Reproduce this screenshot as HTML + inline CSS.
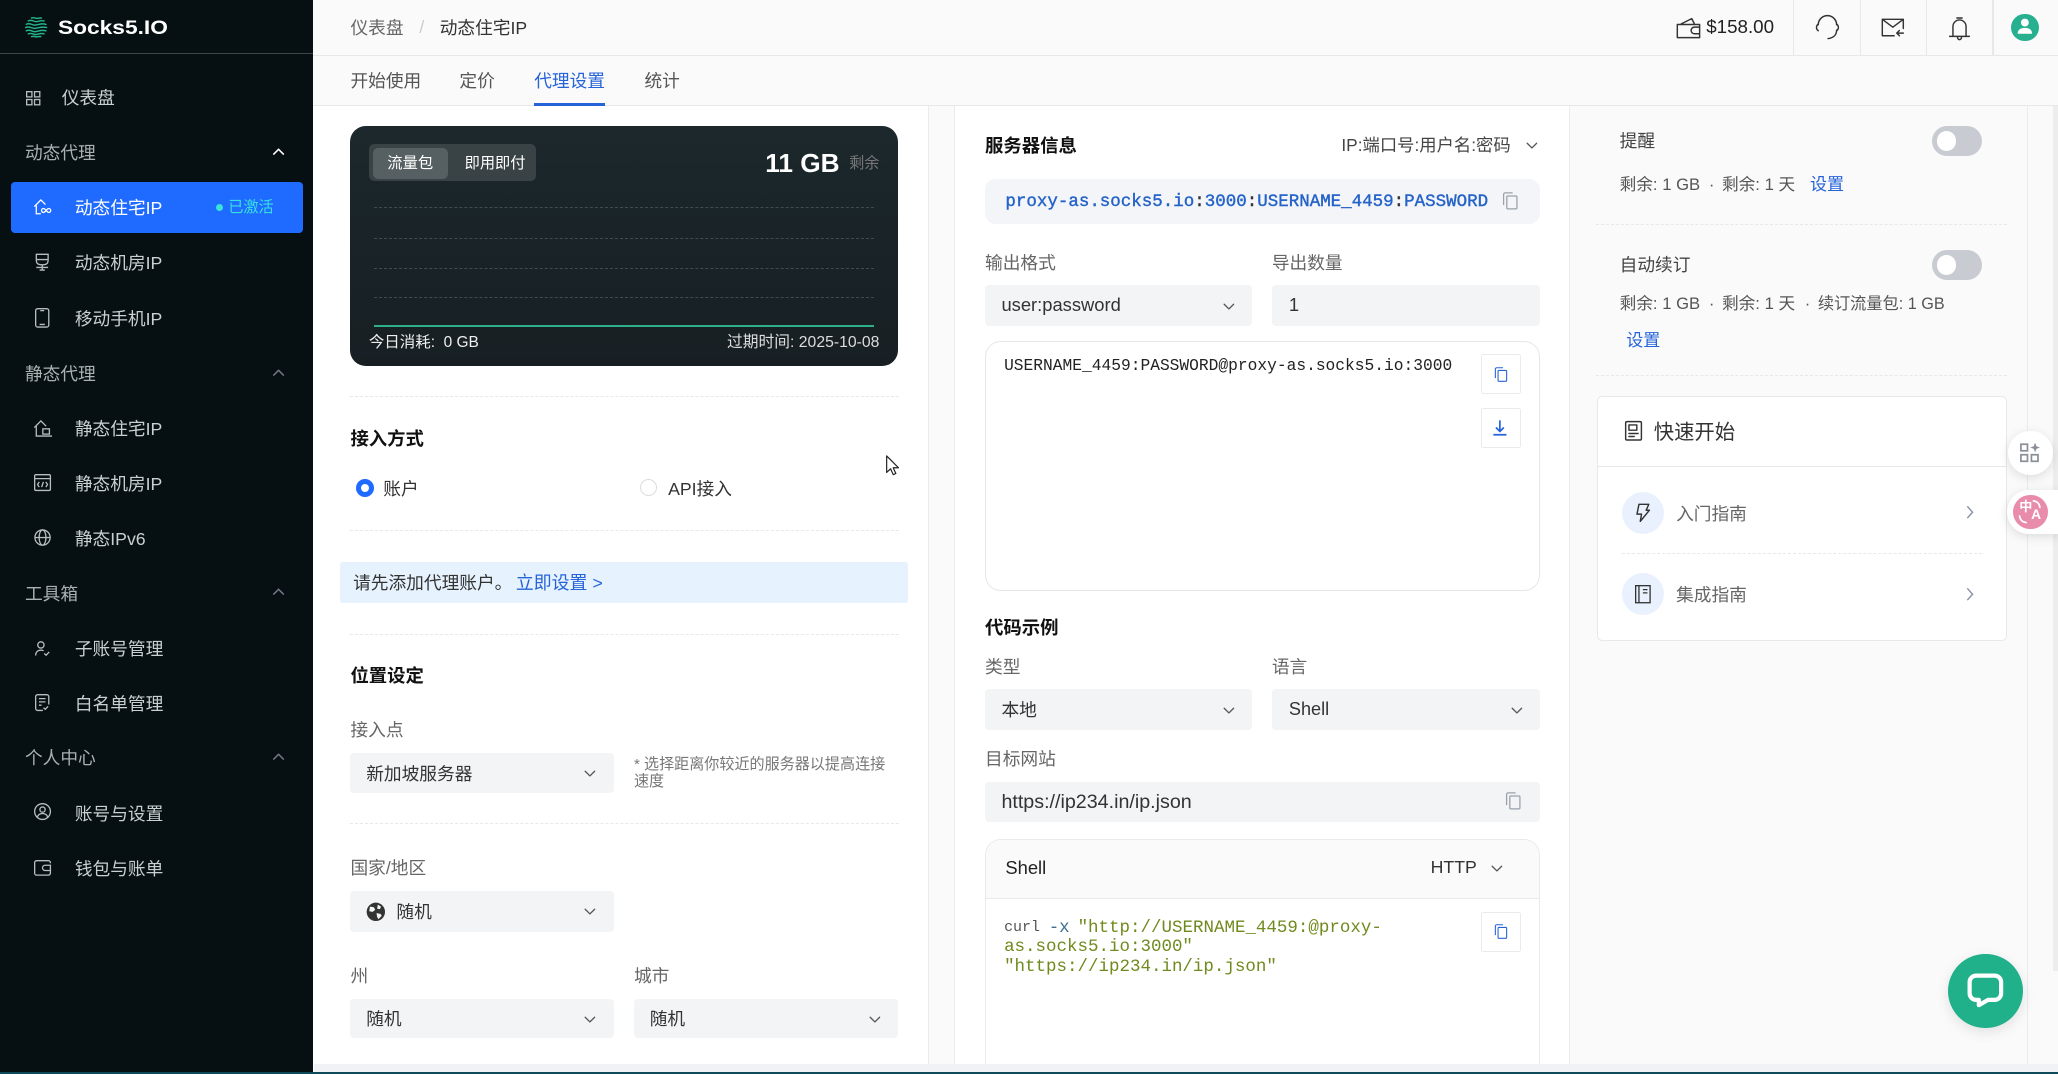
<!DOCTYPE html>
<html lang="zh-CN"><head><meta charset="utf-8"><title>Socks5.IO</title>
<style>
html,body{margin:0;padding:0;width:2058px;height:1074px;overflow:hidden;background:#fff}
#w{position:absolute;left:0;top:0;width:1568px;height:818.3px;zoom:1.3125;overflow:hidden;background:#fff;font-family:"Liberation Sans","Noto Sans CJK SC",sans-serif;font-size:13.5px;color:#333}
#w *{box-sizing:border-box}
.a{position:absolute}
.t{position:absolute;white-space:nowrap;line-height:20px;margin-top:.8px}
.n{color:#c9d0d1}.h{color:#a9b1b3}
.b{font-weight:700;color:#111;font-size:14px}
.l{color:#666}
.s{position:absolute;background:#f3f4f6;border-radius:3px}
.d{position:absolute;height:0;border-top:1px dashed #e8e8e8}
.m{font-family:"Liberation Mono","Noto Sans CJK SC",monospace}
.bt{position:absolute;width:31px;height:30px;background:#fff;border:1px solid #e8eaee;border-radius:2px}
svg{position:absolute;overflow:visible}
.i{fill:none;stroke:#b6bebf;stroke-width:1}
.c{fill:none;stroke:#555;stroke-width:1.1;stroke-linecap:round;stroke-linejoin:round}
.blue{color:#2563d9}
.sm{color:#555;font-size:12.7px}
</style></head><body>
<svg width="0" height="0" style="position:absolute"><defs>
<symbol id="cd" viewBox="0 0 10 6"><path d="M1 1l4 4 4-4" fill="none" stroke="#555" stroke-width="1.1" stroke-linecap="round" stroke-linejoin="round"/></symbol>
<symbol id="cp" viewBox="0 0 16 18"><path d="M1.5 13V3A1.5 1.5 0 0 1 3 1.500H10" fill="none" stroke="currentColor" stroke-width="1.2"/><rect x="4.500" y="4.500" width="9.500" height="12" rx="1" fill="none" stroke="currentColor" stroke-width="1.2"/></symbol>
</defs></svg>
<div id="w">
<!-- backgrounds -->
<div class="a" style="left:707px;top:80px;width:861px;height:731px;background:#fafafa"></div>
<div class="a" style="left:239px;top:80px;width:468px;height:731px;background:#fff"></div>
<div class="a" style="left:707px;top:80px;width:1px;height:731px;background:#ececec"></div>
<div class="a" style="left:727px;top:80px;width:469px;height:731px;background:#fff;border-left:1px solid #ececec;border-right:1px solid #ececec"></div>
<div class="a" style="left:1544.500px;top:80px;width:1px;height:731px;background:#ececec"></div>
<div class="a" style="left:1564px;top:80px;width:4px;height:660px;background:#ededed"></div>

<!-- header -->
<div class="a" style="left:238px;top:0;width:1330px;height:42.500px;background:#fafafa;border-bottom:1px solid #e8e8e8"></div>
<div class="a" style="left:238px;top:43px;width:1330px;height:37.500px;background:#fafafa;border-bottom:1px solid #e8e8e8"></div>
<div class="t" style="left:267px;top:11px;color:#666">仪表盘</div>
<div class="t" style="left:319.500px;top:10px;color:#ccc">/</div>
<div class="t" style="left:335px;top:11px;color:#333">动态住宅IP</div>
<div class="t" style="left:267px;top:51px;color:#555">开始使用</div>
<div class="t" style="left:350px;top:51px;color:#555">定价</div>
<div class="t" style="left:407px;top:51px;color:#2563d9">代理设置</div>
<div class="a" style="left:407px;top:78.500px;width:54px;height:2px;background:#2563d9"></div>
<div class="t" style="left:491px;top:51px;color:#555">统计</div>
<div class="a" style="left:1366px;top:0;width:1px;height:42px;background:#e8e8e8"></div>
<div class="a" style="left:1417px;top:0;width:1px;height:42px;background:#e8e8e8"></div>
<div class="a" style="left:1467.500px;top:0;width:1px;height:42px;background:#e8e8e8"></div>
<div class="a" style="left:1518px;top:0;width:1px;height:42px;background:#e8e8e8"></div>
<svg style="left:1277px;top:12px" width="19" height="18" viewBox="0 0 19 18"><path class="c" style="stroke:#333" d="M1 6.500h17v2M18 13.500v3H1v-10M4 6l8-4 2 4M18 8.500h-4a2.500 2.500 0 0 0 0 5h4v-5"/></svg>
<div class="t" style="left:1300px;top:9.500px;color:#222;font-size:14.300px">$158.00</div>
<svg style="left:1381px;top:10px" width="22" height="22" viewBox="0 0 22 22"><path class="c" style="stroke:#333" d="M4 9a7 7 0 0 1 14 0M4 8.500a3 3 0 0 0 0 5M18 8.500a3 3 0 0 1 0 5M18 13c0 4-3 6-6.500 6.500"/></svg>
<svg style="left:1433px;top:14px" width="18" height="15" viewBox="0 0 18 15"><path class="c" style="stroke:#333" d="M10 13.500H1V1h16v7M1 1l8 6 8-6M17 11.500h-5M14 9.500l-2 2 2 2"/></svg>
<svg style="left:1485px;top:12px" width="16" height="19" viewBox="0 0 16 19"><path class="c" style="stroke:#333" d="M6 1.500h4M3 15V8a5 5 0 0 1 10 0v7M.5 15.500h15M6.500 16.500a1.500 1.500 0 0 0 3 0"/></svg>
<div class="a" style="left:1532.500px;top:10.500px;width:21px;height:21px;border-radius:50%;background:#26b08f"></div>
<svg style="left:1537px;top:14px" width="12" height="13" viewBox="0 0 12 13"><circle cx="6" cy="3.500" r="3" fill="#fff"/><path d="M.5 12c0-3 2-4.500 5.500-4.500s5.500 1.500 5.500 4.500z" fill="#fff"/></svg>

<!-- sidebar -->
<div class="a" style="left:0;top:0;width:238.500px;height:817px;background:#060f12"></div>
<div class="a" style="left:0;top:40px;width:238.500px;height:1px;background:#3c4547"></div>
<svg style="left:19px;top:12.500px" width="17" height="17" viewBox="0 0 17 17"><g fill="none" stroke="#25b48c" stroke-width="1.100" stroke-linecap="round"><path d="M5 1.500c2-.8 3 .5 4.500.3 1-.1 2-.5 3-.2"/><path d="M2.500 3.800c3-1.500 4 .8 6.500.5 2-.2 3-1.300 5.500-.5"/><path d="M1 6.300c3-1.500 4.500 1 7 .6 3-.4 4.500-1.700 8-.5"/><path d="M.5 8.800c3-1.500 4.500 1 7.500.6 3-.4 5-1.600 8.500-.6"/><path d="M1 11.300c3-1.500 4.500 1 7 .6 3-.4 4.500-1.700 8-.6"/><path d="M2.500 13.600c2.500-1.200 4 .8 6 .5 2-.3 3.500-1.300 6-.5"/><path d="M5 15.700c2-.6 3 .3 4 .2 1-.1 2-.5 3-.2"/></g></svg>
<div class="t" style="left:44px;top:10.500px;color:#fff;font-weight:700;font-size:15px;transform:scaleX(1.155);transform-origin:0 50%">Socks5.IO</div>

<svg style="left:20px;top:69px" width="11" height="11" viewBox="0 0 11 11"><g class="i"><rect x=".5" y=".5" width="4" height="4"/><rect x="6.500" y=".5" width="4" height="4"/><rect x=".5" y="6.500" width="4" height="4"/><rect x="6.500" y="6.500" width="4" height="4"/></g></svg>
<div class="t n" style="left:47px;top:64px">仪表盘</div>
<div class="t h" style="left:19px;top:106px">动态代理</div>
<svg style="left:207px;top:113px;color:#fff" width="10" height="6" viewBox="0 0 10 6"><path d="M1 5l4-4 4 4" fill="none" stroke="#fff" stroke-width="1.200"/></svg>
<div class="a" style="left:8px;top:139px;width:223px;height:38.500px;border-radius:3px;background:#1f6bff"></div>
<svg style="left:25px;top:151px" width="15" height="13" viewBox="0 0 15 13"><path class="i" style="stroke:#fff" d="M1 6.500L6 1.500l3.500 3.500M2.500 5.500v6.500h3.500"/><path class="i" style="stroke:#fff" d="M8 11a1.500 1.500 0 1 1 0-3c1.500 0 2.500 3 4 3a1.500 1.500 0 1 0 0-3c-1.500 0-2.500 3-4 3z"/></svg>
<div class="t" style="left:57px;top:148px;color:#fff">动态住宅IP</div>
<div class="a" style="left:164.500px;top:155.500px;width:5.500px;height:5.500px;border-radius:50%;background:#37e4d6"></div>
<div class="t" style="left:174px;top:148px;color:#37e0e0;font-size:11.500px">已激活</div>

<svg style="left:27px;top:193px" width="11" height="14" viewBox="0 0 11 14"><path class="i" d="M1 1h9v4H1zM1 5c0 3 1 4 4.500 4S10 8 10 5M5.500 9v3.500M1 11h9M3.500 13h4"/></svg>
<div class="t n" style="left:57px;top:190px">动态机房IP</div>
<svg style="left:27px;top:235px" width="11" height="15" viewBox="0 0 11 15"><rect class="i" x=".5" y=".5" width="10" height="14" rx="1.500"/><path class="i" d="M4 2h3M3.500 12.500h4"/></svg>
<div class="t n" style="left:57px;top:232px">移动手机IP</div>
<div class="t h" style="left:19px;top:274px">静态代理</div>
<svg style="left:207px;top:281px" width="10" height="6" viewBox="0 0 10 6"><path d="M1 5l4-4 4 4" fill="none" stroke="#778" stroke-width="1.100"/></svg>
<svg style="left:25px;top:319px" width="15" height="14" viewBox="0 0 15 14"><path class="i" d="M1 6.500L6 1.500l4 4M2.500 5.500v7.500h12"/><rect class="i" x="7.500" y="7.500" width="5" height="4"/></svg>
<div class="t n" style="left:57px;top:316px">静态住宅IP</div>
<svg style="left:26px;top:361px" width="13" height="13" viewBox="0 0 13 13"><rect class="i" x=".5" y=".5" width="12" height="12" rx="1"/><path class="i" d="M.5 3.500h12M4 6L2.700 8 4 10M9 6l1.300 2L9 10M7.200 6L5.800 10"/></svg>
<div class="t n" style="left:57px;top:358px">静态机房IP</div>
<svg style="left:26px;top:403px" width="13" height="13" viewBox="0 0 13 13"><circle class="i" cx="6.500" cy="6.500" r="5.800"/><ellipse class="i" cx="6.500" cy="6.500" rx="2.600" ry="5.800"/><path class="i" d="M.7 6.500h11.600"/></svg>
<div class="t n" style="left:57px;top:400px">静态IPv6</div>
<div class="t h" style="left:19px;top:441.500px">工具箱</div>
<svg style="left:207px;top:448px" width="10" height="6" viewBox="0 0 10 6"><path d="M1 5l4-4 4 4" fill="none" stroke="#778" stroke-width="1.100"/></svg>
<svg style="left:27px;top:488px" width="12" height="12" viewBox="0 0 12 12"><circle class="i" cx="4.500" cy="3" r="2.400"/><path class="i" d="M.5 11c0-2.500 1.500-4 4-4 .8 0 1.500.1 2 .4M7 9.500l1.500 1.300 2.300-2.500"/></svg>
<div class="t n" style="left:57px;top:483.500px">子账号管理</div>
<svg style="left:27px;top:529px" width="11" height="13" viewBox="0 0 11 13"><path class="i" d="M6 12.500H2A1.500 1.500 0 0 1 .5 11V2A1.500 1.500 0 0 1 2 .5h7A1.500 1.500 0 0 1 10.500 2v6M3 3.500h5M3 6h5M3 8.500h2M6.500 10.500l1.300 1.200 2.200-2.300"/></svg>
<div class="t n" style="left:57px;top:525.500px">白名单管理</div>
<div class="t h" style="left:19px;top:567.200px">个人中心</div>
<svg style="left:207px;top:574px" width="10" height="6" viewBox="0 0 10 6"><path d="M1 5l4-4 4 4" fill="none" stroke="#778" stroke-width="1.100"/></svg>
<svg style="left:26px;top:612px" width="13" height="13" viewBox="0 0 13 13"><circle class="i" cx="6.500" cy="6.500" r="6"/><circle class="i" cx="6.500" cy="5" r="2"/><path class="i" d="M2.500 11c.5-2 2-3 4-3s3.500 1 4 3"/></svg>
<div class="t n" style="left:57px;top:609.300px">账号与设置</div>
<svg style="left:26px;top:655px" width="13" height="12" viewBox="0 0 13 12"><path class="i" d="M12.500 2.500V2A1.500 1.500 0 0 0 11 .5H2A1.500 1.500 0 0 0 .5 2v8A1.500 1.500 0 0 0 2 11.500h9a1.500 1.500 0 0 0 1.500-1.500V8"/><path class="i" d="M12.500 4H8.500a2 2 0 0 0 0 4h4z"/></svg>
<div class="t n" style="left:57px;top:651.300px">钱包与账单</div>

<!-- dark card -->
<div class="a" style="left:267px;top:96px;width:417.500px;height:183px;border-radius:12px;background:linear-gradient(180deg,#1c282c,#171f23)"></div>
<div class="a" style="left:281px;top:110px;width:127px;height:28px;border-radius:4px;background:#394346"></div>
<div class="a" style="left:284px;top:113px;width:57.500px;height:23px;border-radius:4px;background:#565f62"></div>
<div class="t" style="left:295px;top:114px;color:#fff;font-size:11.700px">流量包</div>
<div class="t" style="left:354px;top:114px;color:#fff;font-size:11.600px">即用即付</div>
<div class="t" style="left:583px;top:113.200px;color:#fff;font-weight:700;font-size:20px">11 GB</div>
<div class="t" style="left:647px;top:114px;color:#777;font-size:11.500px">剩余</div>
<div class="d" style="left:285px;top:158px;width:381px;border-color:#414b4e"></div>
<div class="d" style="left:285px;top:181px;width:381px;border-color:#414b4e"></div>
<div class="d" style="left:285px;top:204px;width:381px;border-color:#414b4e"></div>
<div class="d" style="left:285px;top:226.500px;width:381px;border-color:#414b4e"></div>
<div class="a" style="left:285px;top:247.800px;width:381px;height:1.500px;background:#2fae8a"></div>
<div class="t" style="left:281px;top:250.500px;color:#eee;font-size:11.800px">今日消耗:&nbsp; 0 GB</div>
<div class="t" style="right:898px;top:250.500px;color:#ddd;font-size:12px">过期时间: 2025-10-08</div>

<div class="d" style="left:267px;top:302px;width:418px"></div>
<div class="t b" style="left:267px;top:324px">接入方式</div>
<div class="a" style="left:271px;top:365px;width:14px;height:14px;border-radius:50%;border:4.500px solid #1f6bff;background:#fff"></div>
<div class="t" style="left:292px;top:362px;color:#333">账户</div>
<div class="a" style="left:487.500px;top:365px;width:13px;height:13px;border-radius:50%;border:1px solid #dcdcdc;background:#fff"></div>
<div class="t" style="left:509px;top:362px;color:#333">API接入</div>
<svg style="left:675px;top:347px" width="11" height="16" viewBox="0 0 11 16"><path d="M.5.700v12.600l3-2.800 2 4.500 2-.9-2-4.400h4z" fill="#fff" stroke="#222" stroke-width=".9" stroke-linejoin="round"/></svg>
<div class="d" style="left:267px;top:404px;width:418px"></div>
<div class="a" style="left:259px;top:428px;width:433px;height:31.500px;background:#e6f2fd;border-radius:2px"></div>
<div class="t" style="left:269px;top:433.500px;color:#333">请先添加代理账户。</div>
<div class="t blue" style="left:393px;top:433.500px;font-size:13.650px">立即设置 &gt;</div>
<div class="d" style="left:267px;top:483px;width:418px"></div>
<div class="t b" style="left:267px;top:504.500px">位置设定</div>
<div class="t l" style="left:267px;top:545.500px">接入点</div>
<div class="s" style="left:267px;top:574px;width:201px;height:30px"></div>
<div class="t" style="left:279px;top:579px">新加坡服务器</div>
<svg style="left:445px;top:587px" width="9" height="5.500"><use href="#cd"/></svg>
<div class="a" style="left:483px;top:576px;width:195px;color:#777;font-size:11.500px;line-height:13px">* 选择距离你较近的服务器以提高连接速度</div>
<div class="d" style="left:267px;top:627px;width:418px"></div>
<div class="t l" style="left:267px;top:651px">国家/地区</div>
<div class="s" style="left:267px;top:679px;width:201px;height:31px"></div>
<svg style="left:279px;top:687px" width="15" height="15" viewBox="0 0 15 15"><circle cx="7.500" cy="7.500" r="7" fill="#333"/><path d="M3 3.500l3 .5 1 2-2 1.500L2.500 7zM9 2l2.500 1.500-1 2L8.500 5zM8 8.500l3 .5 1 1.500-2.500 2.500-1-1.500z" fill="#f3f4f6"/></svg>
<div class="t" style="left:302px;top:684.500px">随机</div>
<svg style="left:445px;top:692px" width="9" height="5.500"><use href="#cd"/></svg>
<div class="t l" style="left:267px;top:733px">州</div>
<div class="t l" style="left:483px;top:733px">城市</div>
<div class="s" style="left:267px;top:761px;width:201px;height:30px"></div>
<div class="t" style="left:279px;top:766px">随机</div>
<svg style="left:445px;top:774px" width="9" height="5.500"><use href="#cd"/></svg>
<div class="s" style="left:483px;top:761px;width:201.500px;height:30px"></div>
<div class="t" style="left:495px;top:766px">随机</div>
<svg style="left:662px;top:774px" width="9" height="5.500"><use href="#cd"/></svg>

<!-- middle -->
<div class="t b" style="left:750.500px;top:100.200px">服务器信息</div>
<div class="t" style="left:1022px;top:100px;color:#444;font-size:13.200px">IP:端口号:用户名:密码</div>
<svg style="left:1163px;top:108px" width="9" height="5.500"><use href="#cd"/></svg>
<div class="a" style="left:750.500px;top:136px;width:422.500px;height:35px;background:#f3f5f8;border-radius:8px"></div>
<div class="t m" style="left:766px;top:143px;font-size:13.333px;-webkit-text-stroke:.3px #2563c9;color:#2563c9">proxy-as.socks5.io<span style="color:#333;-webkit-text-stroke:.3px #333">:</span>3000<span style="color:#333;-webkit-text-stroke:.3px #333">:</span>USERNAME_4459<span style="color:#333;-webkit-text-stroke:.3px #333">:</span>PASSWORD</div>
<svg style="left:1144px;top:145.500px;color:#9aa2ad" width="13" height="15"><use href="#cp"/></svg>
<div class="t l" style="left:750.500px;top:190px">输出格式</div>
<div class="t l" style="left:969px;top:190px">导出数量</div>
<div class="s" style="left:750.500px;top:217px;width:203.500px;height:31px"></div>
<div class="t" style="left:763px;top:222px;font-size:14px">user:password</div>
<svg style="left:932px;top:231px" width="9" height="5.500"><use href="#cd"/></svg>
<div class="s" style="left:969px;top:217px;width:204px;height:31px"></div>
<div class="t" style="left:982px;top:222px;font-size:14px">1</div>
<div class="a" style="left:750.500px;top:260px;width:422.500px;height:190px;border:1px solid #e5e7eb;border-radius:12px;background:#fff"></div>
<div class="t m" style="left:765px;top:268px;font-size:12.380px;color:#222">USERNAME_4459:PASSWORD@proxy-as.socks5.io:3000</div>
<div class="bt" style="left:1128px;top:270px"></div>
<svg style="left:1138px;top:278.500px;color:#2563d9" width="11" height="13"><use href="#cp"/></svg>
<div class="bt" style="left:1128px;top:311px"></div>
<svg style="left:1137px;top:319px" width="12" height="13" viewBox="0 0 12 13"><path d="M6 1v8M3 6.500L6 9.500l3-3M1 12h10" fill="none" stroke="#2563d9" stroke-width="1.300"/></svg>
<div class="t b" style="left:750.500px;top:468px">代码示例</div>
<div class="t l" style="left:750.500px;top:497.500px">类型</div>
<div class="t l" style="left:969px;top:497.500px">语言</div>
<div class="s" style="left:750.500px;top:525px;width:203.500px;height:31px"></div>
<div class="t" style="left:763px;top:530px">本地</div>
<svg style="left:932px;top:539px" width="9" height="5.500"><use href="#cd"/></svg>
<div class="s" style="left:969px;top:525px;width:204px;height:31px"></div>
<div class="t" style="left:982px;top:529.500px;font-size:13.800px">Shell</div>
<svg style="left:1151px;top:539px" width="9" height="5.500"><use href="#cd"/></svg>
<div class="t l" style="left:750.500px;top:567.500px">目标网站</div>
<div class="s" style="left:750.500px;top:596px;width:422.500px;height:30px"></div>
<div class="t" style="left:763px;top:600.200px;font-size:15px">https://ip234.in/ip.json</div>
<svg style="left:1147px;top:603px;color:#9aa2ad" width="13" height="15"><use href="#cp"/></svg>
<div class="a" style="left:750.500px;top:639px;width:422.500px;height:172px;border:1px solid #e8eaee;border-bottom:0;border-radius:12px 12px 0 0;background:#fff;overflow:hidden"><div style="height:45px;background:#fafafa;border-bottom:1px solid #e8e8e8"></div></div>
<div class="t" style="left:766px;top:651px;color:#222;font-size:14px">Shell</div>
<div class="t" style="left:1090px;top:650px;color:#333">HTTP</div>
<svg style="left:1136px;top:659px" width="9" height="5.500"><use href="#cd"/></svg>
<div class="t m" style="left:765px;top:696px;font-size:11.400px;color:#555">curl</div>
<div class="t m" style="left:799px;top:696px;font-size:13.333px;color:#3e6e90">-x</div>
<div class="t m" style="left:821px;top:696px;font-size:13.333px;color:#6f8a1e">"http://USERNAME_4459:@proxy-</div>
<div class="t m" style="left:765px;top:711px;font-size:13.333px;color:#6f8a1e">as.socks5.io:3000"</div>
<div class="t m" style="left:765px;top:726.300px;font-size:13.333px;color:#6f8a1e">"https://ip234.in/ip.json"</div>
<div class="bt" style="left:1128px;top:695px"></div>
<svg style="left:1138px;top:703.500px;color:#2563d9" width="11" height="13"><use href="#cp"/></svg>

<!-- right -->
<div class="t" style="left:1234px;top:97px;color:#444">提醒</div>
<div class="a" style="left:1472px;top:96px;width:38px;height:23px;border-radius:12px;background:#c8cbd2"></div>
<div class="a" style="left:1475.500px;top:100px;width:15px;height:15px;border-radius:50%;background:#fff"></div>
<div class="t sm" style="left:1234px;top:130px">剩余: 1 GB</div>
<div class="t sm" style="left:1302px;top:130px">·</div>
<div class="t sm" style="left:1312px;top:130px">剩余: 1 天</div>
<div class="t blue" style="left:1379px;top:130px;font-size:13px">设置</div>
<div class="d" style="left:1216px;top:171px;width:313px"></div>
<div class="t" style="left:1234px;top:191px;color:#444">自动续订</div>
<div class="a" style="left:1472px;top:190.500px;width:38px;height:23px;border-radius:12px;background:#c8cbd2"></div>
<div class="a" style="left:1475.500px;top:194.500px;width:15px;height:15px;border-radius:50%;background:#fff"></div>
<div class="t sm" style="left:1234px;top:221px">剩余: 1 GB</div>
<div class="t sm" style="left:1302px;top:221px">·</div>
<div class="t sm" style="left:1312px;top:221px">剩余: 1 天</div>
<div class="t sm" style="left:1375px;top:221px">·</div>
<div class="t sm" style="left:1385px;top:221px;font-size:12.350px">续订流量包: 1 GB</div>
<div class="t blue" style="left:1239px;top:249px;font-size:13px">设置</div>
<div class="d" style="left:1216px;top:285.500px;width:313px"></div>
<div class="a" style="left:1216.500px;top:302px;width:312.500px;height:186px;background:#fff;border:1px solid #e8e8e8;border-radius:4px"></div>
<div class="a" style="left:1217px;top:355px;width:312px;height:1px;background:#e8e8e8"></div>
<svg style="left:1238px;top:321px" width="13" height="15" viewBox="0 0 13 15"><rect class="c" style="stroke:#333" x=".5" y=".5" width="12" height="14" rx="1"/><rect class="c" style="stroke:#333" x="3" y="3" width="6" height="4"/><path class="c" style="stroke:#333" d="M3 9.500h7M3 11.800h4"/></svg>
<div class="t" style="left:1260px;top:319px;font-size:15.500px;color:#333">快速开始</div>
<div class="a" style="left:1235.500px;top:374.500px;width:32px;height:32px;border-radius:50%;background:#eaf1fe"></div>
<svg style="left:1246px;top:383px" width="12" height="15" viewBox="0 0 12 15"><path d="M3 1h7.500L8.500 5.500H11L4 14l1-5.500H1.500z" fill="none" stroke="#333" stroke-width="1.100" stroke-linejoin="round"/></svg>
<div class="t" style="left:1277px;top:381px;color:#666">入门指南</div>
<svg style="left:1498px;top:385px" width="6" height="11" viewBox="0 0 6 11"><path d="M1 1l4 4.500L1 10" fill="none" stroke="#8a94a6" stroke-width="1.100"/></svg>
<div class="d" style="left:1236px;top:421.500px;width:274px"></div>
<div class="a" style="left:1235.500px;top:436.500px;width:32px;height:32px;border-radius:50%;background:#eaf1fe"></div>
<svg style="left:1245.500px;top:445.500px" width="12" height="14" viewBox="0 0 12 14"><rect x=".5" y=".5" width="11" height="13" fill="none" stroke="#333" stroke-width="1"/><path d="M3 .5v13M6 3.500h3.500M6 6h3.500" fill="none" stroke="#333" stroke-width="1"/></svg>
<div class="t" style="left:1277px;top:443px;color:#666">集成指南</div>
<svg style="left:1498px;top:447px" width="6" height="11" viewBox="0 0 6 11"><path d="M1 1l4 4.500L1 10" fill="none" stroke="#8a94a6" stroke-width="1.100"/></svg>

<!-- bottom band, above panels -->
<div class="a" style="left:239px;top:811px;width:1329px;height:7px;background:#f0f2f5"></div>
<div class="a" style="left:0;top:817px;width:1568px;height:2px;background:#0f4a5a"></div>

<!-- floats -->
<div class="a" style="left:1530px;top:328px;width:34px;height:34px;border-radius:50%;background:#fff;box-shadow:0 2px 8px rgba(0,0,0,.12)"></div>
<svg style="left:1539px;top:337px" width="16" height="16" viewBox="0 0 16 16"><g fill="none" stroke="#8a8f96" stroke-width="1.300"><rect x=".7" y="1.700" width="5" height="5"/><rect x=".7" y="9.700" width="5" height="5"/><rect x="8.700" y="9.700" width="5" height="5"/></g><path d="M11.500.5l1 2.700 2.700 1-2.700 1-1 2.700-1-2.700-2.700-1 2.700-1z" fill="#8a8f96"/></svg>
<div class="a" style="left:1529px;top:373px;width:40px;height:34px;border-radius:17px 0 0 17px;background:#fff;box-shadow:0 2px 8px rgba(0,0,0,.12)"></div>
<div class="a" style="left:1534px;top:377px;width:26px;height:26px;border-radius:50%;background:#e98cab"></div>
<div class="t" style="left:1538.500px;top:379.500px;color:#fff;font-size:10px;font-weight:700;line-height:12px">中</div>
<div class="t" style="left:1547.500px;top:385.700px;color:#fff;font-size:10.500px;font-weight:700;line-height:12px">A</div>
<svg style="left:1534px;top:377px" width="26" height="26" viewBox="0 0 26 26"><path d="M15.500 4.500c2.800.3 4.700 2.200 5 5M5 16c.3 2.800 2.200 4.700 5 5" fill="none" stroke="#fff" stroke-width="1.300" stroke-linecap="round"/></svg>
<div class="a" style="left:1484px;top:726.500px;width:57px;height:57px;border-radius:50%;background:#20b08a;box-shadow:0 3px 10px rgba(0,0,0,.1)"></div>
<svg style="left:1499px;top:741px" width="28" height="27" viewBox="0 0 28 27"><path d="M7 2h14a5 5 0 0 1 5 5v8.500a5 5 0 0 1-5 5h-5l-7 4v-4H7a5 5 0 0 1-5-5V7a5 5 0 0 1 5-5z" fill="none" stroke="#fff" stroke-width="3.200" stroke-linejoin="round"/></svg>
</div>
</body></html>
